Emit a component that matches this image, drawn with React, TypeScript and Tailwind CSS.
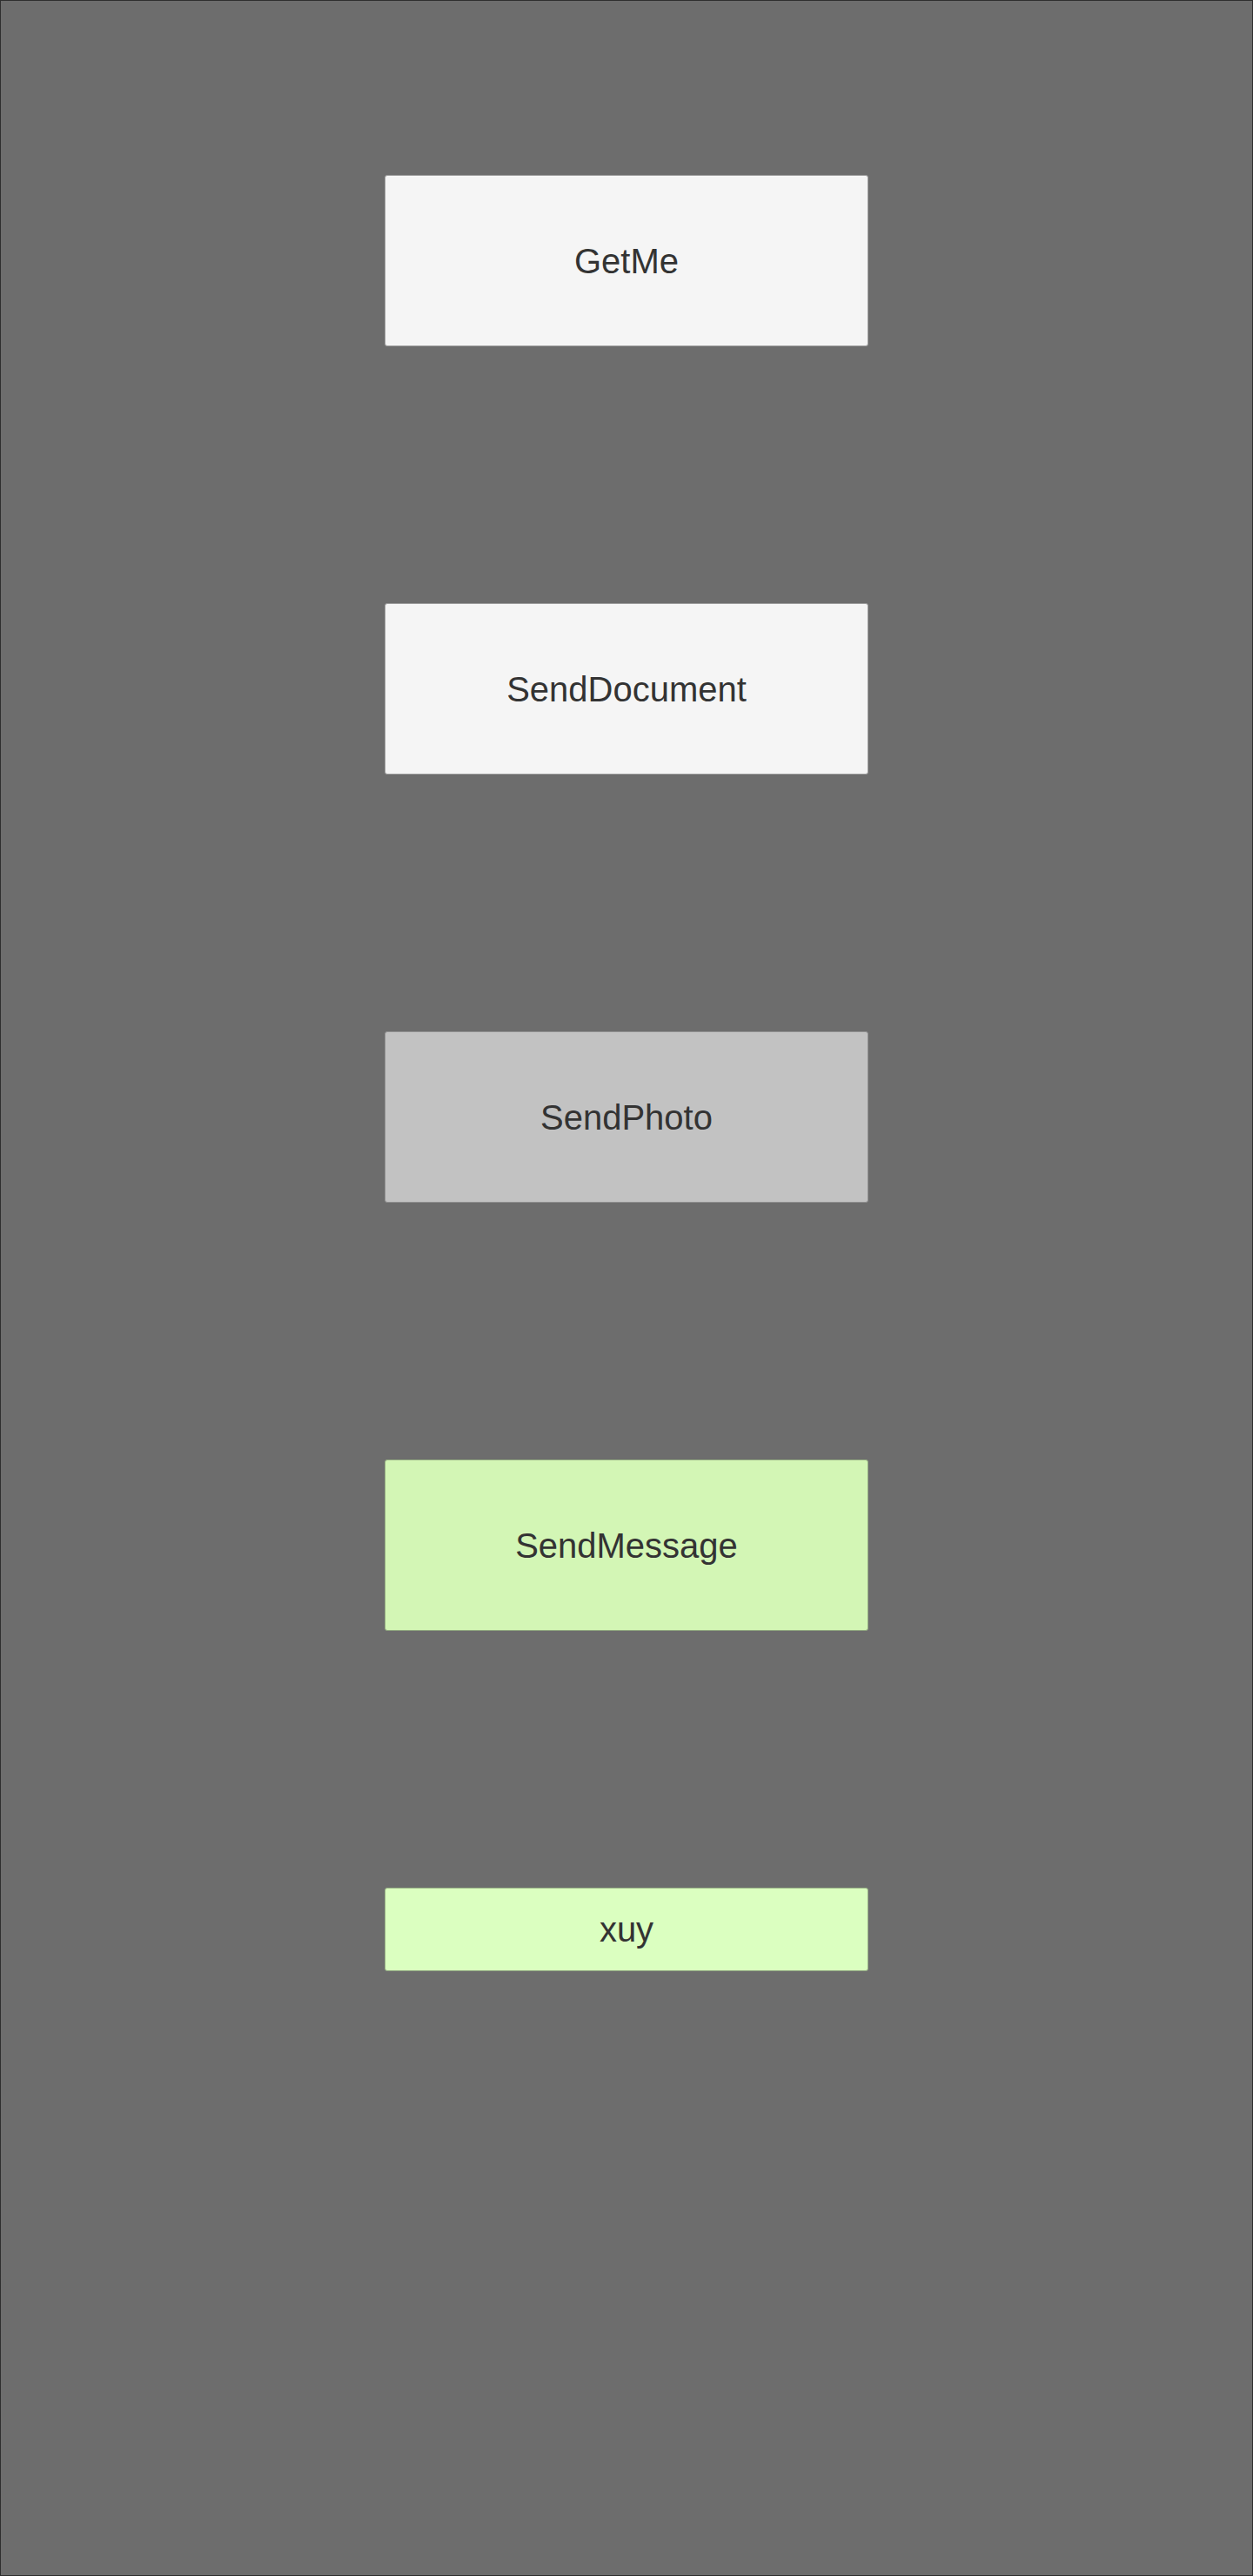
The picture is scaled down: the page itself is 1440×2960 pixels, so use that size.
import React from "react";

interface Action {
    label: string;
    bg: string;
    tall: boolean;
}

const actions: Action[] = [
    { label: "GetMe", bg: "bg-[#f5f5f5] border-[#9a9a9a]", tall: true },
    { label: "SendDocument", bg: "bg-[#f5f5f5] border-[#9a9a9a]", tall: true },
    { label: "SendPhoto", bg: "bg-[#c2c2c2] border-[#8e8e8e]", tall: true },
    { label: "SendMessage", bg: "bg-[#d3f6b5] border-[#8fa67e]", tall: true },
    { label: "xuy", bg: "bg-[#dbffc0] border-[#93ab82]", tall: false },
];

const ActionButton: React.FC<{ action: Action }> = ({ action }) => (
    <button
        className={`w-[556px] ${action.tall ? "h-[197px]" : "h-[96px]"} ${action.bg} border rounded-[3px] flex items-center justify-center text-[40px] text-[#333333]`}
        style={{ fontFamily: '"Liberation Sans", Arial, sans-serif' }}
    >
        {action.label}
    </button>
);

const App: React.FC = () => {
    return (
        <div className="w-[1440px] h-[2960px] bg-[#6d6d6d] border border-[#2e2e2e] flex flex-col items-center pt-[200px] gap-[295px]">
            {actions.map((a) => (
                <ActionButton key={a.label} action={a} />
            ))}
        </div>
    );
};

export default App;
